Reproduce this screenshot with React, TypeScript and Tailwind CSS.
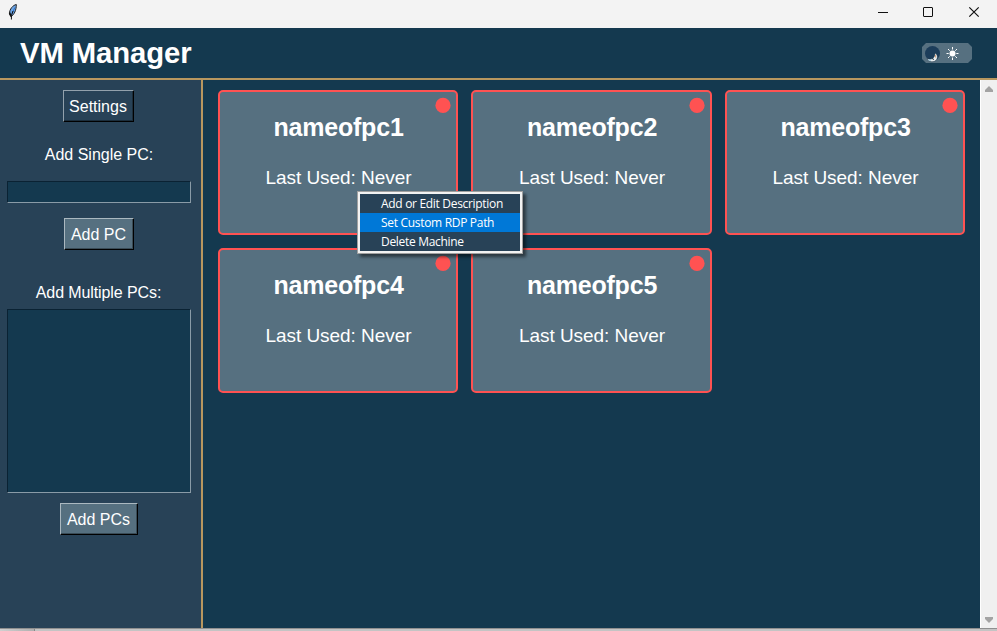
import React from "react";

const machines = ["nameofpc1", "nameofpc2", "nameofpc3", "nameofpc4", "nameofpc5"];

function TitleBar() {
  return (
    <div className="flex h-7 shrink-0 justify-between bg-[#f3f3f3]">
      <svg className="mt-[3px] ml-[7px] h-[18px] w-3" viewBox="0 0 12 18">
        <path d="M9.3 1.5C6 2.2 2.4 6 2.4 11L4 13.5C7 12 9.5 7 9.3 1.5Z" fill="#6ea6e6" stroke="#222" strokeWidth="1" />
        <path d="M7.8 4.5L5 11" stroke="#2b70c8" strokeWidth="1" />
        <path d="M6 8L4.4 12.5V16.5" fill="none" stroke="#111" strokeWidth="1" />
        <path d="M2.6 9.5L4 13.5" stroke="#111" strokeWidth="1.5" />
      </svg>
      <svg className="h-7 w-[119px]" viewBox="878 0 119 28" fill="none" stroke="#111" strokeWidth="1">
        <path d="M878 12.5H888" />
        <rect x="923.5" y="7.5" width="9" height="9" rx="0.5" />
        <path d="M969.3 7.3L978.7 16.7M978.7 7.3L969.3 16.7" strokeWidth="1.2" />
      </svg>
    </div>
  );
}

function ThemeSwitch() {
  return (
    <svg className="h-5 w-[50px]" viewBox="0 0 50 20">
      <path d="M4 0H46L50 4V16L46 20H4L0 16V4Z" fill="#567080" />
      <circle cx="10.5" cy="10.5" r="7.5" fill="#1c3d5a" />
      <path d="M13 10C16 11.5 16.5 16.5 12.5 18.3C9.5 19.4 6 18.6 5.2 15.5C8.5 17 13 16 13 10Z" fill="#e8eef0" stroke="#1c3040" strokeWidth="0.5" />
      <path d="M13.5 12V14.5" stroke="#d9a07c" strokeWidth="1" />
      <path d="M10 15.5L12 16.5" stroke="#1c3040" strokeWidth="1" />
      <path d="M6.5 17H9" stroke="#79b9da" strokeWidth="0.9" />
      <circle cx="30.5" cy="10.5" r="3" fill="#fff" />
      <path d="M30.5 4V6.5M30.5 14.5V17M24.5 10.5H26.7M34.3 10.5H36.5M26 6L27.7 7.7M33.3 13.3L35 15M26 15L27.7 13.3M33.3 7.7L35 6" stroke="#fff" strokeWidth="1" />
    </svg>
  );
}

function PushButton({ label, className }: { label: string; className: string }) {
  return (
    <button
      className={`flex h-8 shrink-0 items-center justify-center border border-r-black border-b-black pt-px pr-px text-[16px] leading-none whitespace-nowrap ${className}`}
    >
      {label}
    </button>
  );
}

function Sidebar() {
  return (
    <aside className="flex w-[203px] shrink-0 flex-col items-center border-r-2 border-[#b8975f] bg-[#284257] pr-[3px] pt-[10px] text-[16px] leading-5">
      <PushButton label="Settings" className="mr-px w-[71px] border-t-[#93a1ac] border-l-[#93a1ac] bg-[#284257] shadow-[inset_-1px_-1px_#1b2d3b]" />
      <div className="mt-[23px] h-5">Add Single PC:</div>
      <input className="mt-4 h-[22px] w-[184px] shrink-0 border border-t-[#0a2233] border-r-[#8a9ba7] border-b-[#8a9ba7] border-l-[#0a2233] bg-[#14394f] outline-none" />
      <PushButton label="Add PC" className="mt-[15px] w-[70px] border-t-[#abb8c0] border-l-[#abb8c0] bg-[#567080] shadow-[inset_-1px_-1px_#394b56]" />
      <div className="mt-[33px] h-5 pr-px tracking-[-0.1px]">Add Multiple PCs:</div>
      <textarea className="mt-1.5 block h-[184px] w-[184px] shrink-0 resize-none border border-t-[#0a2233] border-r-[#8a9ba7] border-b-[#8a9ba7] border-l-[#0a2233] bg-[#14394f] outline-none" />
      <PushButton label="Add PCs" className="mt-[10px] w-[78px] border-t-[#abb8c0] border-l-[#abb8c0] bg-[#567080] shadow-[inset_-1px_-1px_#394b56]" />
    </aside>
  );
}

function MachineCard({ name }: { name: string }) {
  return (
    <article className="relative flex flex-col items-center rounded-[5px] border-2 border-[#ff5252] bg-[#567080] pt-[19px]">
      <svg className="absolute top-[5px] right-[5px] size-4" viewBox="0 0 16 16">
        <circle cx="8" cy="8.4" r="7.6" fill="#ff5252" />
      </svg>
      <h2 className="pl-px text-[25px] leading-8 font-bold tracking-[-0.2px]">{name}</h2>
      <p className="mt-[23px] pl-px text-[19px] leading-6 tracking-[-0.04px]">Last Used: Never</p>
    </article>
  );
}

function ContextMenu() {
  return (
    <div className="absolute top-[191px] left-[357px] w-[166px] border border-[#a0a0a0] bg-[#284257] font-['Open_Sans',sans-serif] text-[12px] leading-[19px] shadow-[3px_3px_3px_rgba(0,0,0,0.5)]">
      <div className="border-2 border-[#f2f2f2]">
        <div className="h-[19px] pl-[21px] tracking-[-0.31px]">Add or Edit Description</div>
        <div className="h-[19px] bg-[#0078d7] pl-[21px] tracking-[-0.31px]">Set Custom RDP Path</div>
        <div className="h-[19px] pl-[21px] tracking-[-0.31px]">Delete Machine</div>
      </div>
    </div>
  );
}

export default function App() {
  return (
    <div className="relative flex h-[631px] w-[997px] flex-col overflow-hidden bg-[#14394f] font-['Liberation_Sans',Arial,sans-serif] text-white">
      <TitleBar />
      <header className="flex h-[52px] shrink-0 items-center justify-between border-b-2 border-[#b8975f] pr-[25px] pl-5">
        <h1 className="text-[29.3px] leading-9 font-bold tracking-[-0.1px]">VM Manager</h1>
        <ThemeSwitch />
      </header>
      <div className="flex h-[548px] shrink-0">
        <Sidebar />
        <main className="grid flex-1 auto-rows-[145px] grid-cols-[240px_241px_240px] content-start gap-[13px] pt-[10px] pl-[15px]">
          {machines.map((name) => (
            <MachineCard key={name} name={name} />
          ))}
        </main>
        <div className="flex w-[17px] flex-col items-center justify-between border-l border-white bg-[#f0f0f0] pt-1.5 pb-[5px]">
          <svg className="h-1.5 w-2" viewBox="0 0 8 6"><path d="M4 0L8 4V6H0V4Z" fill="#a3a3a3" /></svg>
          <svg className="h-1.5 w-2" viewBox="0 0 8 6"><path d="M4 6L8 2V0H0V2Z" fill="#a3a3a3" /></svg>
        </div>
      </div>
      <div className="flex h-[3px] border-t border-[#909090] bg-[#c4c4c4]">
        <div className="w-[35px] border-r border-[#888] bg-linear-to-r from-[#d0d0d0] to-[#b0b0b0]" />
      </div>
      <ContextMenu />
    </div>
  );
}
